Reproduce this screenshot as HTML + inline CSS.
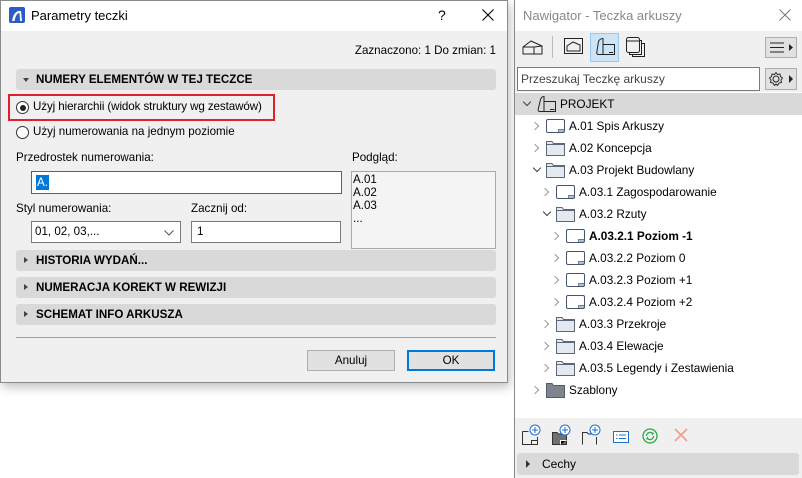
<!DOCTYPE html>
<html><head><meta charset="utf-8"><style>
*{box-sizing:border-box;margin:0;padding:0}
body{width:802px;height:478px;background:#fff;position:relative;overflow:hidden;font-family:"Liberation Sans",sans-serif;font-size:11.6px;color:#000}
.a{position:absolute;white-space:nowrap}
.hdr{position:absolute;left:16px;width:480px;height:21px;background:#d9d9d9;border-radius:3px;font-weight:bold;font-size:11.6px;line-height:21px;padding-left:20px}
.hdr:before{content:"";position:absolute;left:8px;top:7px;border-left:4px solid #444;border-top:3.5px solid transparent;border-bottom:3.5px solid transparent}
.hdr.open:before{left:7px;top:9px;border-top:4px solid #444;border-left:3.5px solid transparent;border-right:3.5px solid transparent;border-bottom:0}
.inp{position:absolute;background:#fff;border:1px solid #7a7a7a}
.row{position:absolute;height:22px;line-height:22px;font-size:11.8px}
.chev{position:absolute;width:6px;height:6px;border-right:1.3px solid #999;border-bottom:1.3px solid #999;transform:rotate(-45deg)}
.chev.d{transform:rotate(45deg);border-color:#444}
</style></head><body>
<div class="a" style="left:0;top:0;width:508px;height:383px;border:1px solid #8a8a8a;background:#f0f0f0;box-shadow:2px 4px 10px rgba(0,0,0,.25)"></div>
<div class="a" style="left:1px;top:1px;width:506px;height:30px;background:#fff"></div>
<svg class="a" style="left:9px;top:7px" width="16" height="16"><rect x="0" y="0" width="16" height="16" rx="2" fill="#2a5cc8"/><path d="M3 14 Q5 3 12 4 L13 14 L11 14 L10.5 6 Q7 6 5.5 14Z" fill="#fff"/></svg>
<div class="a" style="left:31px;top:8px;font-size:13px">Parametry teczki</div>
<div class="a" style="left:438px;top:7px;font-size:14px">?</div>
<svg class="a" style="left:482px;top:9px" width="12" height="12"><path d="M0.5 0.5L11.5 11.5M11.5 0.5L0.5 11.5" stroke="#000" stroke-width="1.1"/></svg>
<div class="a" style="right:306px;top:44px">Zaznaczono: 1 Do zmian: 1</div>
<div class="hdr open" style="top:69px">NUMERY ELEMENTÓW W TEJ TECZCE</div>
<div class="a" style="left:8px;top:94px;width:267px;height:27px;border:2px solid #e0212b"></div>
<div class="a" style="left:16px;top:101px;width:13px;height:13px;border:1px solid #333;border-radius:50%;background:#fff"><div style="margin:2.5px;width:6px;height:6px;border-radius:50%;background:#222"></div></div>
<div class="a" style="left:33px;top:100px;letter-spacing:-0.1px">Użyj hierarchii (widok struktury wg zestawów)</div>
<div class="a" style="left:16px;top:126px;width:13px;height:13px;border:1px solid #333;border-radius:50%;background:#fff"></div>
<div class="a" style="left:33px;top:125px">Użyj numerowania na jednym poziomie</div>
<div class="a" style="left:16px;top:151px">Przedrostek numerowania:</div>
<div class="a" style="left:352px;top:151px">Podgląd:</div>
<div class="inp" style="left:31px;top:171px;width:311px;height:23px;border-color:#0078d7"><span style="position:absolute;left:4px;top:3px;background:#0078d7;color:#fff;padding:0 1px;line-height:15px">A.</span></div>
<div class="inp" style="left:351px;top:171px;width:145px;height:78px;border-color:#aaa;background:#f4f4f4;line-height:13px;padding:1px 1px">A.01<br>A.02<br>A.03<br>...</div>
<div class="a" style="left:16px;top:202px">Styl numerowania:</div>
<div class="a" style="left:191px;top:202px">Zacznij od:</div>
<div class="inp" style="left:31px;top:221px;width:150px;height:22px;padding:3px 3px">01, 02, 03,...<svg style="position:absolute;right:6px;top:8px" width="10" height="6"><path d="M0.5 0.5L5 5L9.5 0.5" stroke="#555" fill="none"/></svg></div>
<div class="inp" style="left:191px;top:221px;width:150px;height:22px;padding:3px 5px">1</div>
<div class="hdr" style="top:250px">HISTORIA WYDAŃ...</div>
<div class="hdr" style="top:277px">NUMERACJA KOREKT W REWIZJI</div>
<div class="hdr" style="top:304px">SCHEMAT INFO ARKUSZA</div>
<div class="a" style="left:16px;top:337px;width:480px;height:1px;background:#a0a0a0"></div>
<div class="a" style="left:307px;top:350px;width:88px;height:21px;background:#e1e1e1;border:1px solid #adadad;text-align:center;line-height:19px">Anuluj</div>
<div class="a" style="left:407px;top:350px;width:88px;height:21px;background:#e1e1e1;border:2px solid #0078d7;text-align:center;line-height:17px">OK</div>

<div class="a" style="left:514px;top:0;width:288px;height:478px;border-left:1px solid #888;background:#f0f0f0"></div>
<div class="a" style="left:515px;top:0;width:287px;height:31px;background:#fff"></div>
<div class="a" style="left:523px;top:8px;font-size:13px;color:#888">Nawigator - Teczka arkuszy</div>
<svg class="a" style="left:779px;top:9px" width="12" height="12"><path d="M0.5 0.5L11.5 11.5M11.5 0.5L0.5 11.5" stroke="#777" stroke-width="1"/></svg>
<svg class="a" style="left:522px;top:38px" width="22" height="18"><path d="M1 16V9L9 3L20 8V16ZM1 9L12 9L20 8M12 9V16" fill="none" stroke="#222"/></svg>
<div class="a" style="left:552px;top:36px;width:1px;height:22px;background:#bbb"></div>
<svg class="a" style="left:564px;top:37px" width="20" height="18"><rect x="0.5" y="1.5" width="18" height="15" fill="none" stroke="#222"/><path d="M3 14V9L9 5L16 8V14Z" fill="none" stroke="#222"/></svg>
<div class="a" style="left:590px;top:33px;width:29px;height:29px;background:#cce4f7;border:1px solid #99c9ef"></div>
<svg class="a" style="left:594px;top:37px" width="22" height="20"><path d="M4.5 4.5Q6 1.5 9 1.5V17.5H4.5Q2 17.5 3 14Z M9 7.5H20.5V17.5H9" fill="none" stroke="#222"/><path d="M15 15.5H19" stroke="#222"/></svg>
<svg class="a" style="left:626px;top:37px" width="20" height="20"><rect x="0.5" y="0.5" width="13" height="15" rx="2" fill="none" stroke="#222"/><path d="M14 3.5H15.5V17.5H3.5V16M16 6.5H18.5V19.5H6.5V18" fill="none" stroke="#222"/><path d="M0.5 4H13.5" stroke="#222"/></svg>
<div class="a" style="left:765px;top:37px;width:32px;height:21px;background:#e1e1e1;border:1px solid #adadad"></div>
<svg class="a" style="left:770px;top:42px" width="24" height="11"><path d="M0 1H14M0 5.5H14M0 10H14" stroke="#222"/><path d="M19 2L23 5.5L19 9Z" fill="#222"/></svg>
<div class="a" style="left:517px;top:67px;width:243px;height:24px;background:#fff;border:1px solid #7a7a7a;padding:4px 3px;color:#444;font-size:12px">Przeszukaj Teczkę arkuszy</div>
<div class="a" style="left:765px;top:68px;width:32px;height:22px;background:#e1e1e1;border:1px solid #adadad"></div>
<svg class="a" style="left:768px;top:71px" width="26" height="16"><circle cx="8" cy="8" r="3" fill="none" stroke="#222"/><path d="M8 1.5L9.5 3.5L12 3L12.5 5.5L14.5 7L13 9L13.5 11.5L11 12L9.5 14.5L8 13L6.5 14.5L5 12L2.5 11.5L3 9L1.5 7L3.5 5.5L4 3L6.5 3.5Z" fill="none" stroke="#222" stroke-width=".9"/><path d="M21 4L25 8L21 12Z" fill="#222"/></svg>
<div class="a" style="left:515px;top:92px;width:287px;height:326px;background:#fff"></div>
<div class="a" style="left:515px;top:93px;width:287px;height:22px;background:#d9d9d9"></div>
<div class="chev d" style="left:524px;top:99px"></div>
<svg class="a" style="left:536px;top:96px" width="20" height="16"><path d="M4.5 3.5Q5.5 0.5 8 0.5V15.5H3.5Q1.5 15.5 2.5 12Z M8 5.5H19.5V15.5H8" fill="none" stroke="#222"/><path d="M14 13.5H18.5" stroke="#222"/></svg>
<div class="row" style="left:560px;top:93px">PROJEKT</div>

<svg width="0" height="0" style="position:absolute"><defs>
<symbol id="sh" viewBox="0 0 19 14"><rect x="0.5" y="0.5" width="18" height="13" rx="1.5" fill="#fff" stroke="#44546a"/><path d="M12.5 13.5V10.5H18.5M13 12H18" fill="none" stroke="#44546a" stroke-width=".7"/></symbol>
<symbol id="fo" viewBox="0 0 19 15"><path d="M0.5 14.5V0.5H6L7.5 2.5H18.5V14.5Z" fill="#e4e8ef" stroke="#5c6778"/><path d="M0.5 3.5H18.5" stroke="#5c6778"/></symbol>
<symbol id="fd" viewBox="0 0 19 15"><path d="M0.5 14.5V0.5H6L7.5 2.5H18.5V14.5Z" fill="#7f8590" stroke="#555b66"/></symbol>
</defs></svg>

<div class="chev" style="left:532px;top:123px"></div><svg class="a" style="left:546px;top:119px" width="19" height="14"><use href="#sh"/></svg><div class="row" style="left:569px;top:115px">A.01 Spis Arkuszy</div>
<div class="chev" style="left:532px;top:145px"></div><svg class="a" style="left:546px;top:141px" width="19" height="15"><use href="#fo"/></svg><div class="row" style="left:569px;top:137px">A.02 Koncepcja</div>
<div class="chev d" style="left:534px;top:165px"></div><svg class="a" style="left:546px;top:163px" width="19" height="15"><use href="#fo"/></svg><div class="row" style="left:569px;top:159px">A.03 Projekt Budowlany</div>
<div class="chev" style="left:542px;top:189px"></div><svg class="a" style="left:556px;top:185px" width="19" height="14"><use href="#sh"/></svg><div class="row" style="left:579px;top:181px">A.03.1 Zagospodarowanie</div>
<div class="chev d" style="left:544px;top:209px"></div><svg class="a" style="left:556px;top:207px" width="19" height="15"><use href="#fo"/></svg><div class="row" style="left:579px;top:203px">A.03.2 Rzuty</div>
<div class="chev" style="left:552px;top:233px"></div><svg class="a" style="left:566px;top:229px" width="19" height="14"><use href="#sh"/></svg><div class="row" style="left:589px;top:225px;font-weight:bold">A.03.2.1 Poziom -1</div>
<div class="chev" style="left:552px;top:255px"></div><svg class="a" style="left:566px;top:251px" width="19" height="14"><use href="#sh"/></svg><div class="row" style="left:589px;top:247px">A.03.2.2 Poziom 0</div>
<div class="chev" style="left:552px;top:277px"></div><svg class="a" style="left:566px;top:273px" width="19" height="14"><use href="#sh"/></svg><div class="row" style="left:589px;top:269px">A.03.2.3 Poziom +1</div>
<div class="chev" style="left:552px;top:299px"></div><svg class="a" style="left:566px;top:295px" width="19" height="14"><use href="#sh"/></svg><div class="row" style="left:589px;top:291px">A.03.2.4 Poziom +2</div>
<div class="chev" style="left:542px;top:321px"></div><svg class="a" style="left:556px;top:317px" width="19" height="15"><use href="#fo"/></svg><div class="row" style="left:579px;top:313px">A.03.3 Przekroje</div>
<div class="chev" style="left:542px;top:343px"></div><svg class="a" style="left:556px;top:339px" width="19" height="15"><use href="#fo"/></svg><div class="row" style="left:579px;top:335px">A.03.4 Elewacje</div>
<div class="chev" style="left:542px;top:365px"></div><svg class="a" style="left:556px;top:361px" width="19" height="15"><use href="#fo"/></svg><div class="row" style="left:579px;top:357px">A.03.5 Legendy i Zestawienia</div>
<div class="chev" style="left:532px;top:387px"></div><svg class="a" style="left:546px;top:383px" width="19" height="15"><use href="#fd"/></svg><div class="row" style="left:569px;top:379px">Szablony</div>

<svg class="a" style="left:520px;top:424px" width="180" height="22">
<g fill="none" stroke="#333"><path d="M2.5 7.5H8.5M2.5 7.5V20.5H17.5V13"/><path d="M11.5 20.5V16.5H17.5" /></g>
<circle cx="15" cy="6" r="5" fill="#fff" stroke="#1f6fd0"/><path d="M15 3V9M12 6H18" stroke="#1f6fd0"/>
<path d="M32.5 20.5V8.5H37L38.5 10H46.5V20.5Z" fill="#707070" stroke="#333"/><path d="M40.5 20.5V16.5H46.5" stroke="#fff"/>
<circle cx="45" cy="6" r="5" fill="#fff" stroke="#1f6fd0"/><path d="M45 3V9M42 6H48" stroke="#1f6fd0"/>
<path d="M62.5 20.5V8.5H67L68.5 10H73M76.5 13V20.5Z" fill="none" stroke="#333"/>
<circle cx="75" cy="6" r="5" fill="#fff" stroke="#1f6fd0"/><path d="M75 3V9M72 6H78" stroke="#1f6fd0"/>
<rect x="93.5" y="7.5" width="15" height="11" fill="#fff" stroke="#1f6fd0"/><path d="M96 11H97.5M99 11H106M96 14.5H97.5M99 14.5H106" stroke="#1f6fd0"/>
<circle cx="130" cy="12" r="7" fill="none" stroke="#2aa84a" stroke-width="1.3"/><path d="M126.5 12A3.5 3.5 0 0 1 132.5 9.5M133.5 12A3.5 3.5 0 0 1 127.5 14.5" fill="none" stroke="#2aa84a" stroke-width="1.2"/><path d="M131 8L134 9L132.5 11.5Z M129 16L126 15L127.5 12.5Z" fill="#2aa84a"/>
<path d="M155 5L167 17M167 5L155 17" stroke="#f29b8f" stroke-width="1.6"/>
</svg>
<div class="a" style="left:517px;top:453px;width:282px;height:22px;background:#d9d9d9;border-radius:3px;line-height:22px;padding-left:25px;font-size:12px">Cechy</div>
<div class="a" style="left:526px;top:460px;border-left:4px solid #333;border-top:4px solid transparent;border-bottom:4px solid transparent"></div>
</body></html>
